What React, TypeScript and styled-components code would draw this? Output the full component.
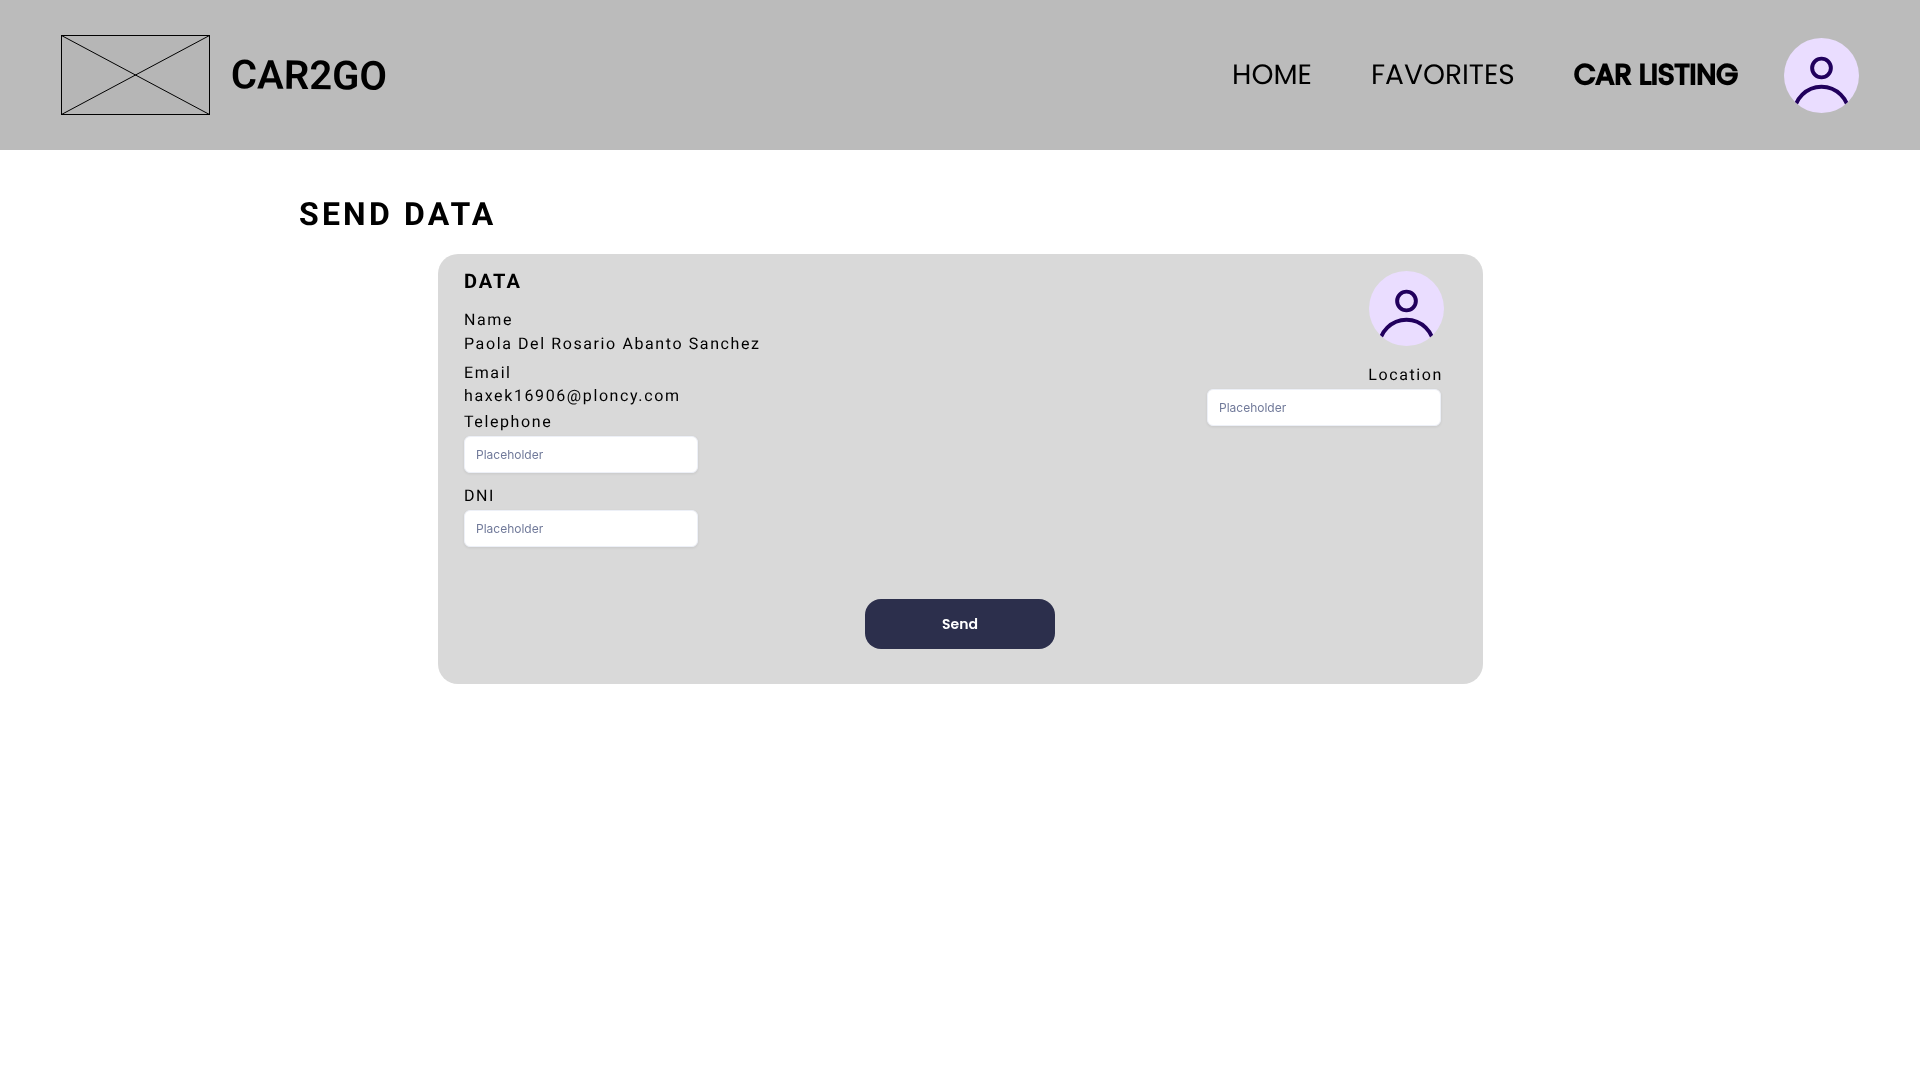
import React from "react";
import styled, { createGlobalStyle } from "styled-components";

const GlobalStyle = createGlobalStyle`
  * { box-sizing: border-box; }
  body { margin: 0; background: #fff; color: #000; font-family: Roboto, "Open Sans", sans-serif; text-rendering: geometricPrecision; }
  h1, h2, p { margin: 0; }
`;

const Page = styled.div`
  width: 1920px;
  height: 1080px;
  overflow: hidden;
  will-change: transform;
`;

const Header = styled.header`
  display: flex;
  align-items: center;
  height: 150px;
  padding: 0 61px;
  background: #bbb;
`;

const Logo = styled.svg`
  display: block;
  width: 149px;
  height: 80px;
`;

const Brand = styled.span`
  margin: 1.5px 0 0 21px;
  font-size: 40px;
  font-weight: 600;
  line-height: 48px;
  transform: rotate(0.6deg);
`;

const Nav = styled.nav`
  display: flex;
  align-items: center;
  margin-left: auto;
`;

const NavLink = styled.a<{ $width: number; $gap: number; $active?: boolean }>`
  width: ${(p) => p.$width}px;
  margin-right: ${(p) => p.$gap}px;
  font-family: Poppins, Lato, sans-serif;
  font-size: 28px;
  line-height: 36px;
  white-space: nowrap;
  -webkit-text-stroke: ${(p) => (p.$active ? "2px #000" : "0")};
`;

const AvatarSvg = styled.svg`
  display: block;
  width: 75px;
  height: 75px;
`;

const Title = styled.h1`
  margin: 45px 0 0 299px;
  font-size: 32px;
  font-weight: 700;
  line-height: 38px;
  letter-spacing: 3.2px;
`;

const Card = styled.main`
  display: flex;
  flex-direction: column;
  width: 1045px;
  height: 430px;
  margin: 21px 0 0 438px;
  padding: 17px 39px 35px 26px;
  border-radius: 20px;
  background: #d9d9d9;
`;

const Columns = styled.div`
  display: flex;
  justify-content: space-between;
  flex: 1;
`;

const Column = styled.section<{ $end?: boolean }>`
  display: flex;
  flex-direction: column;
  align-items: ${(p) => (p.$end ? "flex-end" : "flex-start")};
`;

const SectionTitle = styled.h2`
  font-size: 20px;
  font-weight: 700;
  line-height: 20px;
  letter-spacing: 2px;
`;

const Line = styled.p<{ $top?: number; $right?: number }>`
  margin-top: ${(p) => p.$top ?? 0}px;
  margin-right: ${(p) => p.$right ?? 0}px;
  font-size: 16px;
  line-height: 20px;
  letter-spacing: 1.6px;
`;

const Input = styled.input<{ $right?: number }>`
  width: 234px;
  height: 37px;
  margin: 4px ${(p) => p.$right ?? 0}px 0 0;
  padding: 0 11px;
  border: 1px solid #edf0f7;
  border-radius: 6px;
  background: #fff;
  box-shadow: 0 1px 3px rgba(0, 0, 0, 0.08);
  font-family: Inter, sans-serif;
  font-size: 12px;
  &::placeholder { color: #717a9a; opacity: 1; }
`;

const SendButton = styled.button`
  align-self: center;
  width: 190px;
  height: 50px;
  margin-left: 12px;
  border: 0;
  border-radius: 16px;
  background: #2c2f4c;
  color: #fff;
  font-family: Poppins, Lato, sans-serif;
  font-size: 14px;
  font-weight: 600;
`;

function Avatar({ id }: { id: string }) {
  return (
    <AvatarSvg viewBox="0 0 40 40" fill="none">
      <clipPath id={id}><circle cx="20" cy="20" r="20" /></clipPath>
      <g clipPath={`url(#${id})`}>
        <rect width="40" height="40" fill="#eaddff" />
        <circle cx="20" cy="16" r="5" stroke="#21005d" strokeWidth="2.1" />
        <circle cx="20" cy="40.45" r="14.5" stroke="#21005d" strokeWidth="2.1" />
      </g>
    </AvatarSvg>
  );
}

export default function App() {
  return (
    <Page>
      <GlobalStyle />
      <Header>
        <Logo viewBox="0 0 149 80" fill="none" stroke="#000">
          <rect x="0.5" y="0.5" width="148" height="79" fill="#b6b6b6" />
          <path d="M.5.5l148 79M.5 79.5l148-79" />
        </Logo>
        <Brand>CAR2GO</Brand>
        <Nav>
          <NavLink $width={79} $gap={60}>HOME</NavLink>
          <NavLink $width={143} $gap={60}>FAVORITES</NavLink>
          <NavLink $width={164} $gap={46} $active>CAR LISTING</NavLink>
          <Avatar id="header-avatar" />
        </Nav>
      </Header>
      <Title>SEND DATA</Title>
      <Card>
        <Columns>
          <Column>
            <SectionTitle>DATA</SectionTitle>
            <Line $top={19}>Name</Line>
            <Line $top={4}>Paola Del Rosario Abanto Sanchez</Line>
            <Line $top={9}>Email</Line>
            <Line $top={3}>haxek16906@ploncy.com</Line>
            <Line $top={6}>Telephone</Line>
            <Input placeholder="Placeholder" />
            <Line $top={13}>DNI</Line>
            <Input placeholder="Placeholder" />
          </Column>
          <Column $end>
            <Avatar id="card-avatar" />
            <Line $top={19} $right={1}>Location</Line>
            <Input placeholder="Placeholder" $right={3} />
          </Column>
        </Columns>
        <SendButton>Send</SendButton>
      </Card>
    </Page>
  );
}
